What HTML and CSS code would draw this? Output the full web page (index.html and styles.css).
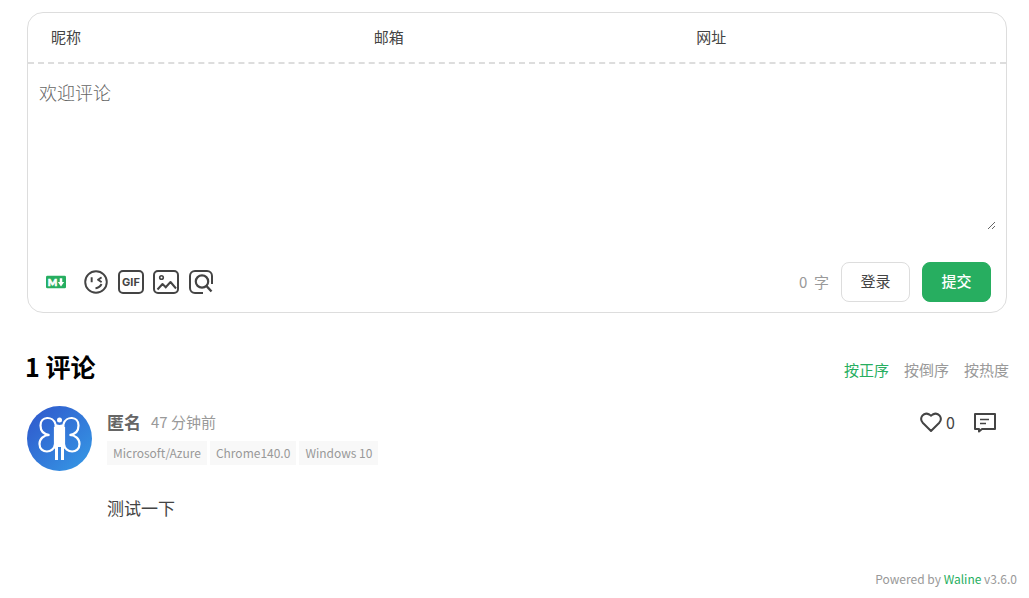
FILE: index.html
```html
<!DOCTYPE html>
<html lang="zh-CN">
<head>
<meta charset="utf-8">
<meta name="viewport" content="width=device-width, initial-scale=1">
<title>评论</title>
<link rel="stylesheet" href="styles.css">
</head>
<body>
<main class="comments">
  <form class="panel">
    <div class="panel-header">
      <div class="field"><label for="nick">昵称</label><input id="nick" type="text"></div>
      <div class="field"><label for="mail">邮箱</label><input id="mail" type="email"></div>
      <div class="field"><label for="link">网址</label><input id="link" type="url"></div>
    </div>
    <textarea class="editor" aria-label="评论内容" placeholder="欢迎评论"></textarea>
    <div class="panel-footer">
      <div class="tools">
        <a class="tool tool-md" href="#markdown" aria-label="Markdown">
          <svg width="20" height="20" viewBox="0 0 16 16"><rect y="3" width="16" height="10" rx="1.1" fill="currentColor"/><text class="md-letter" x="1.4" y="11">M</text><path d="M11.99 11.5 9.5 8H11V5h2v3h1.5z" fill="#fff"/></svg>
        </a>
        <button class="tool" type="button" aria-label="表情">
          <svg width="30" height="30" viewBox="0 0 1024 1024" fill="currentColor"><path d="M563.2 463.3 677 540c1.7 1.2 3.7 1.8 5.8 1.8.7 0 1.4-.1 2-.2 2.7-.5 5.1-2.1 6.6-4.4l25.3-37.8c1.5-2.3 2.1-5.1 1.6-7.8s-2.1-5.1-4.4-6.6l-73.6-49.1 73.6-49.1c2.3-1.5 3.9-3.9 4.4-6.6.5-2.7 0-5.5-1.6-7.8l-25.3-37.8a10.1 10.1 0 0 0-6.6-4.4c-.7-.1-1.3-.2-2-.2-2.1 0-4.1.6-5.8 1.8l-113.8 76.6c-9.2 6.2-14.7 16.4-14.7 27.5.1 11 5.5 21.3 14.7 27.4zM387 348.8h-45.5c-5.7 0-10.4 4.7-10.4 10.4v153.3c0 5.7 4.7 10.4 10.4 10.4H387c5.7 0 10.4-4.7 10.4-10.4V359.2c0-5.700-4.700-10.400-10.400-10.400zm333.800 241.300-41-20a10.300 10.300 0 0 0-8.100-.5c-2.600.9-4.800 2.900-5.900 5.400-30.100 64.900-93.100 109.100-164.400 115.200-5.700.5-9.900 5.500-9.500 11.200l3.900 45.500c.5 5.300 5 9.500 10.300 9.500h.9c94.800-8 178.500-66.500 218.600-152.700 2.400-5 .3-11.200-4.800-13.600z"/><circle cx="512" cy="512" r="368" fill="none" stroke="currentColor" stroke-width="66"/></svg>
        </button>
        <button class="tool" type="button" aria-label="动图">
          <svg width="30" height="30" viewBox="0 0 30 30" fill="none" stroke="currentColor" stroke-width="2"><rect x="3" y="4" width="24" height="22" rx="4"/><text class="gif-letters" x="15" y="19" text-anchor="middle">GIF</text></svg>
        </button>
        <button class="tool" type="button" aria-label="上传图片">
          <svg width="30" height="30" viewBox="0 0 30 30" fill="none" stroke="currentColor" stroke-width="2" stroke-linejoin="round"><rect x="3" y="4" width="24" height="22" rx="4"/><circle cx="10.500" cy="10.500" r="1.800" stroke-width="1.600"/><path d="m6.500 22.500 5-5.500 4 4M14 21l5.500-6 5.500 6.500"/></svg>
        </button>
        <button class="tool" type="button" aria-label="预览">
          <svg width="30" height="30" viewBox="0 0 30 30" fill="none" stroke="currentColor" stroke-width="2"><path d="M17 26H9a5 5 0 0 1-5-5V9a5 5 0 0 1 5-5h12a5 5 0 0 1 5 5v8"/><circle cx="16" cy="14.500" r="6.200" stroke-width="2.200"/><path d="m20.500 19 5 5.500" stroke-width="2.400"/></svg>
        </button>
      </div>
      <div class="actions">
        <span class="count">0&nbsp; 字</span>
        <button class="btn" type="button">登录</button>
        <button class="btn btn-primary" type="submit">提交</button>
      </div>
    </div>
  </form>

  <div class="meta">
    <h2 class="total">1 评论</h2>
    <ul class="sort">
      <li class="active">按正序</li>
      <li>按倒序</li>
      <li>按热度</li>
    </ul>
  </div>

  <article class="card">
    <svg class="avatar" width="65" height="65" viewBox="0 0 65 65" role="img" aria-label="匿名">
      <defs><linearGradient id="sky" x1="0" y1="0" x2="1" y2="1"><stop offset="0" stop-color="#2f55cb"/><stop offset="1" stop-color="#369be6"/></linearGradient></defs>
      <circle cx="32.500" cy="32.500" r="32.500" fill="url(#sky)"/>
      <g fill="none" stroke="#fff" stroke-width="2.200">
        <path d="M28.500 18C26 9.500 13.500 10 13.500 19.500c0 6 4 9 9 9.500-6 0-10 4-10 9 0 10 14.500 10 15.500 0V21"/>
        <path d="M36.500 18C39 9.500 51.500 10 51.500 19.500c0 6-4 9-9 9.500 6 0 10 4 10 9 0 10-14.500 10-15.500 0V21"/>
      </g>
      <circle cx="32.500" cy="14" r="2.500" fill="#fff"/>
      <path d="M27.500 17q5 4 10 0v26H37v11h-3V41h-3v13h-3V43h-.5z" fill="#fff"/>
    </svg>
    <div class="content">
      <header class="head">
        <div class="author"><strong class="nick">匿名</strong><time class="time">47 分钟前</time></div>
        <div class="card-actions">
          <button class="action" type="button" aria-label="喜欢 0"><svg width="24" height="24" viewBox="0 0 24 24" fill="none" stroke="currentColor" stroke-width="2" stroke-linejoin="round"><path d="M12 21 3.700 12.700C-.2 8 4.500 1.500 10.300 4.500L12 5.800l1.700-1.300C19.500 1.500 24.200 8 20.300 12.700z"/></svg><span>0</span></button>
          <button class="action" type="button" aria-label="回复"><svg width="24" height="24" viewBox="0 0 24 24" fill="none" stroke="currentColor" stroke-width="2" stroke-linejoin="round"><path d="M2 4h20v15H9l-3 2.500V19H2z"/><path d="M7 9.500h9M7 13.500h6" stroke-width="1.600"/></svg></button>
        </div>
      </header>
      <div class="tags"><span>Microsoft/Azure</span><span>Chrome140.0</span><span>Windows 10</span></div>
      <p class="text">测试一下</p>
    </div>
  </article>

  <footer class="power">Powered by <a href="#waline">Waline</a> v3.6.0</footer>
</main>
</body>
</html>
```

FILE: styles.css
```css
* { box-sizing: border-box; }
body {
  margin: 0;
  background: #fff;
  color: #444;
  font: 16px/24px "Noto Sans CJK SC", sans-serif;
}
button, input, textarea { font: inherit; color: inherit; }
button { cursor: pointer; }
a { color: #27ae60; text-decoration: none; }
svg { display: block; }

.comments { padding: 12px 12px 0 17px; }

.panel {
  margin: 0 10px;
  border: 1px solid #ddd;
  border-radius: 16px;
}
.panel-header {
  display: grid;
  grid-template-columns: repeat(3, 1fr);
  padding: 0 5px 2px;
  border-bottom: 2px dashed #ddd;
}
.field { display: flex; align-items: center; height: 47px; font-size: 15px; }
.field label { padding: 0 18px; }
.field input { flex: 1; min-width: 0; border: 0; outline: 0; background: none; }

.editor {
  display: block;
  width: calc(100% - 20px);
  height: 152px;
  margin: 14px 10px 0;
  padding: 1px;
  border: 0;
  outline: 0;
  resize: vertical;
  background: none;
  font-size: 18px;
  line-height: 27px;
}
.editor::placeholder { color: #666; font-weight: 300; }

.panel-footer {
  display: flex;
  align-items: center;
  justify-content: space-between;
  padding: 32px 15px 10px 10px;
}
.tools { display: flex; align-items: center; gap: 5px; }
.tool { padding: 0; border: 0; background: none; color: #444; }
.tool-md { margin: 0 10px 0 8px; color: #27ae60; }
.md-letter { fill: #fff; stroke: #fff; stroke-width: 0.5px; font: 900 8px Lato, sans-serif; }
.gif-letters { fill: currentColor; stroke: none; font: 700 11px Inter, sans-serif; }
.actions { display: flex; align-items: center; gap: 12px; }
.count { color: #999; font-size: 15px; }
.btn {
  min-width: 69px;
  height: 40px;
  padding: 0 18px 2px;
  border: 1px solid #ddd;
  border-radius: 8px;
  background: #fff;
  font-size: 15px;
}
.btn-primary { border-color: #27ae60; background: #27ae60; color: #fff; font-weight: 500; }

.meta {
  display: flex;
  align-items: center;
  justify-content: space-between;
  margin-top: 35px;
  padding: 0 8px;
}
.total { margin: 0; color: #000; font-size: 25px; line-height: 37px; }
.sort { display: flex; gap: 15px; margin: 0; padding: 6px 0 0; list-style: none; color: #999; font-size: 15px; }
.sort .active { color: #27ae60; }

.card { display: flex; gap: 15px; margin-top: 21px; padding: 0 20px 0 10px; }
.avatar { flex: none; }
.content { flex: 1; min-width: 0; padding-top: 4px; }
.head { display: flex; align-items: center; justify-content: space-between; }
.author { display: flex; align-items: center; gap: 10px; }
.nick { color: #666; font-size: 17px; }
.time { color: #999; font-size: 15px; }
.card-actions { display: flex; align-items: center; gap: 18px; }
.action { display: flex; align-items: center; gap: 3px; padding: 0; border: 0; background: none; line-height: 22px; }
.tags { display: flex; flex-wrap: wrap; gap: 3px; margin-top: 7px; color: #999; font-size: 12px; }
.tags span { padding: 0 6px; background: #f8f8f8; }
.text { margin: 30px 0 0; font-size: 17px; line-height: 26px; }

.power { margin-top: 46px; color: #999; font-size: 12px; text-align: right; }
```
